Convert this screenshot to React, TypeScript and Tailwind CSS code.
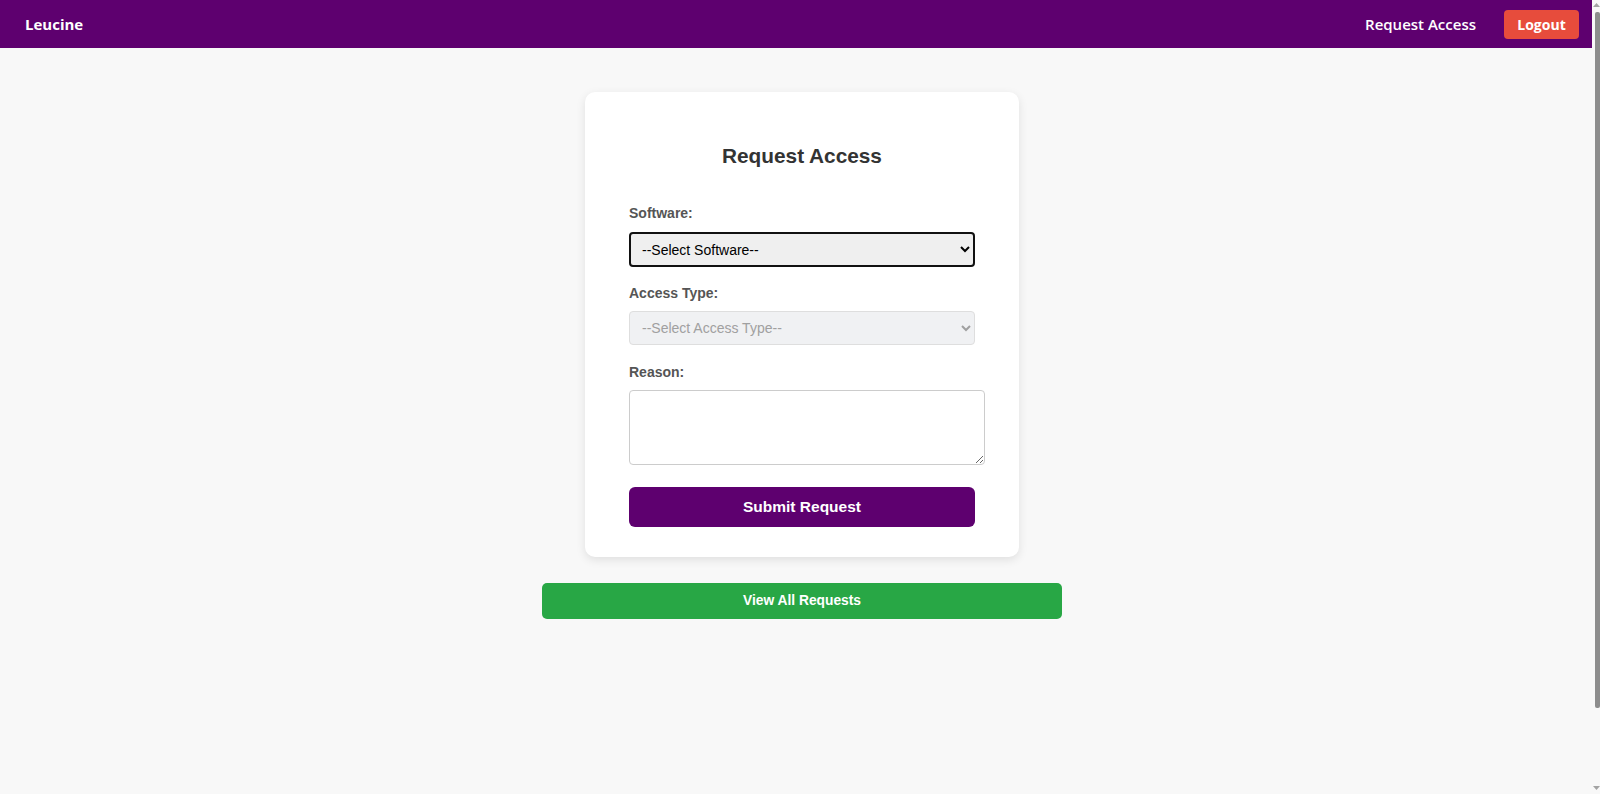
import React, { useState } from 'react';

// thin page scrollbar seen at the right edge of the screenshot
function ScrollRail() {
  return (
    <div className="w-2 shrink-0 bg-[#f8f8f8] flex flex-col items-end pt-[2px] pb-[3px]">
      <svg width="7" height="5" viewBox="0 0 7 5" className="mb-[5px]"><path d="M0 5 L3.5 1 L7 5 Z" fill="#a3a3a3" /></svg>
      <div className="w-[5px] h-[696px] bg-[#8d8d8d] rounded-[2px]" />
      <div className="flex-1" />
      <svg width="7" height="5" viewBox="0 0 7 5"><path d="M0 0 L3.5 4 L7 0 Z" fill="#a3a3a3" /></svg>
    </div>
  );
}

export default function App() {
  const [software, setSoftware] = useState('');
  const [accessType, setAccessType] = useState('');
  const [reason, setReason] = useState('');

  return (
    <div className="h-screen overflow-hidden flex bg-[#f8f8f8]">
      <div className="flex-1 min-w-0">
        <nav className="h-12 bg-[#5e006f] flex items-center justify-between pl-[25px] pr-[13px] font-['Open_Sans',sans-serif]">
          <div className="text-white font-bold text-[15px]">Leucine</div>
          <div className="flex items-center">
            <a className="text-white text-[15px] font-semibold mr-[28px] cursor-pointer">Request Access</a>
            <button className="bg-[#e74c3c] text-white font-bold text-[14px] w-[75px] h-[29px] rounded-[4px]">Logout</button>
          </div>
        </nav>

        <div className="pl-3 font-['Liberation_Sans',Arial,sans-serif]">
          <div className="w-[520px] mx-auto flex flex-col items-center pt-[44px]">
            <div className="w-[434px] bg-white rounded-[10px] shadow-[0_3px_10px_rgba(0,0,0,0.1)] px-[44px] pt-[51px] pb-[30px]">
              <h2 className="text-center text-[20.8px] leading-[25px] font-bold text-[#333] mb-[37px]">Request Access</h2>

              <label className="block text-[14px] leading-4 font-bold text-[#555] mb-[11px]">Software:</label>
              <select
                value={software}
                onChange={e => setSoftware(e.target.value)}
                className="w-full h-[35px] px-[7px] bg-[#efefef] border-2 border-[#111] rounded-[4px] text-[14px] text-black mb-[18px]"
              >
                <option value="">--Select Software--</option>
              </select>

              <label className="block text-[14px] leading-4 font-bold text-[#555] mb-[10px]">Access Type:</label>
              <select
                value={accessType}
                onChange={e => setAccessType(e.target.value)}
                disabled
                className="w-full h-[34px] px-[8px] bg-[#f0f1f3] border border-[#dedede] rounded-[4px] text-[14px] text-[#a0a0a0] mb-[19px]"
              >
                <option value="">--Select Access Type--</option>
              </select>

              <label className="block text-[14px] leading-4 font-bold text-[#555] mb-[10px]">Reason:</label>
              <textarea
                value={reason}
                onChange={e => setReason(e.target.value)}
                className="block w-[356px] h-[75px] p-[5px] bg-white border border-[#ccc] rounded-[4px] text-[14px] mb-[22px]"
              />

              <button className="w-full h-10 bg-[#5e006f] text-white font-bold text-[15.5px] rounded-[6px]">Submit Request</button>
            </div>

            <button className="w-full h-9 mt-[26px] bg-[#28a745] text-white font-bold text-[13.8px] rounded-[5px]">View All Requests</button>
          </div>
        </div>
      </div>
      <ScrollRail />
    </div>
  );
}
